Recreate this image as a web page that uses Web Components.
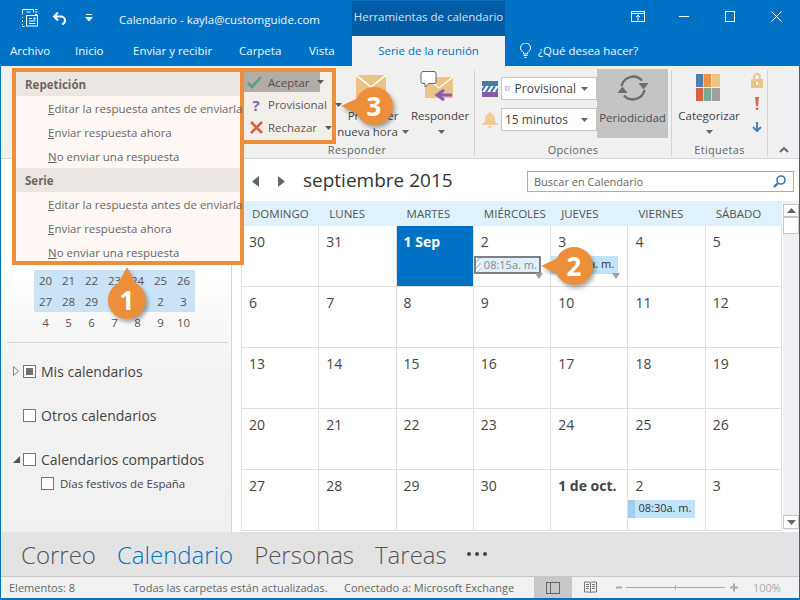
<!DOCTYPE html>
<html lang="es"><head><meta charset="utf-8"><title>Calendario</title>
<style>html,body{margin:0;padding:0;background:#fff}</style></head>
<body>
<ol-app>
  <ol-titlebar></ol-titlebar>
  <ol-tabs></ol-tabs>
  <ol-ribbon></ol-ribbon>
  <ol-main>
    <ol-sidebar slot="side"></ol-sidebar>
    <ol-calendar slot="cal"></ol-calendar>
  </ol-main>
  <ol-nav></ol-nav>
  <ol-status></ol-status>
  <ol-menu>
    <ol-menu-head>Repetición</ol-menu-head>
    <ol-menu-item><u>E</u>ditar la respuesta antes de enviarla</ol-menu-item>
    <ol-menu-item><u>E</u>nviar respuesta ahora</ol-menu-item>
    <ol-menu-item><u>N</u>o enviar una respuesta</ol-menu-item>
    <ol-menu-head>Serie</ol-menu-head>
    <ol-menu-item><u>E</u>ditar la respuesta antes de enviarla</ol-menu-item>
    <ol-menu-item><u>E</u>nviar respuesta ahora</ol-menu-item>
    <ol-menu-item><u>N</u>o enviar una respuesta</ol-menu-item>
  </ol-menu>
  <ol-callout n="1" cx="127" cy="300" dir="up"></ol-callout>
  <ol-callout n="2" cx="574" cy="266" dir="left"></ol-callout>
  <ol-callout n="3" cx="374" cy="106" dir="left"></ol-callout>
</ol-app>
<script>
const FONT = '"Open Sans","Noto Sans",sans-serif';
function def(name, css, html, init){
  customElements.define(name, class extends HTMLElement{
    constructor(){
      super();
      const r = this.attachShadow({mode:'open'});
      r.innerHTML = '<style>'+css+'</style>'+(typeof html==='function'?html(this):html);
    }
    connectedCallback(){ if(init) init(this); }
  });
}
const caret = (c='#666',cls='')=>`<svg class="${cls}" width="7" height="4" viewBox="0 0 7 4" style="flex:none"><path d="M0 0h7L3.5 4z" fill="${c}"/></svg>`;

def('ol-app',`:host{display:flex;flex-direction:column;position:relative;width:800px;height:600px;box-sizing:border-box;padding:0 1px 2px 1px;background:#0072c6;font-family:${FONT};overflow:hidden}`,'<slot></slot>');

def('ol-titlebar',`:host{display:flex;height:36px;color:#fff;font-size:11.5px;flex:none}
.left{width:351px;display:flex;align-items:center;padding-left:20px;box-sizing:border-box}
.title{margin-left:26px;color:#eef6fc;white-space:nowrap;padding-top:2px}
.ctx{width:153px;margin-top:1px;background:#005ca4;color:#cfe3f3;display:flex;align-items:center;justify-content:center;white-space:nowrap;padding-bottom:4px;box-sizing:border-box}
.sp{flex:1}
.win{width:46px;display:flex;align-items:center;justify-content:center;padding-bottom:3px}
svg{display:block}`,`
<div class="left">
 <svg width="18" height="18" viewBox="0 0 18 18" fill="none" stroke="#fff"><path d="M1.5 5.5V.5h11v3M5.500 3h4M1.500 8v1M1.500 11v2M14 .5h2.500M14 3h2.500M14 5.500h2.500M1.500 15v1M1.500 17.500h2"/><rect x="5.500" y="6.500" width="11" height="10.500"/><path d="M8 9.500h3M8 12h6.500M8 14.500h6.500" /><rect x="12.500" y="8.500" width="2" height="2" fill="#fff" stroke="none"/></svg>
 <svg style="margin-left:13px" width="16" height="15" viewBox="0 0 16 15" fill="none" stroke="#fff" stroke-width="2"><path d="M6 1.500 2 5.500l4 4M2 5.500h7a4 4 0 0 1 4 4 4 4 0 0 1-3 3.800"/></svg>
 <svg style="margin-left:17px" width="8" height="8" viewBox="0 0 8 8" fill="#fff"><path d="M1 0h6v1H1zM0 3h8L4 7.500z"/></svg>
 <span class="title" style="margin-left:26px">Calendario - kayla@customguide.com</span>
</div>
<div class="ctx">Herramientas de calendario</div>
<div class="sp"></div>
<div class="win"><svg width="14" height="11" viewBox="0 0 14 11" fill="none" stroke="#fff"><rect x=".5" y=".5" width="13" height="10"/><path d="M.5 2.500h13M7 9.500V4M5 6l2-2 2 2"/></svg></div>
<div class="win"><svg width="10" height="11" viewBox="0 0 10 11" stroke="#fff"><path d="M0 5.500h10"/></svg></div>
<div class="win"><svg width="10" height="11" viewBox="0 0 10 11" fill="none" stroke="#fff"><rect x=".5" y=".5" width="9" height="10"/></svg></div>
<div class="win"><svg width="11" height="11" viewBox="0 0 11 11" stroke="#fff"><path d="M.5.500l10 10M10.500.500l-10 10"/></svg></div>`);

def('ol-tabs',`:host{display:flex;height:30px;color:#eef6fc;font-size:11.5px;flex:none;align-items:stretch;white-space:nowrap}
span{display:flex;align-items:center;padding-bottom:1px}
.a{width:351px;display:flex;padding-left:9px;box-sizing:border-box}
.a span:nth-child(1){width:65px}.a span:nth-child(2){width:58px}.a span:nth-child(3){width:106px}.a span:nth-child(4){width:70px}
.act{width:153px;background:#f0f0f0;color:#0072c6;justify-content:center}
.tell{margin-left:15px;gap:7px}`,`
<div class="a"><span>Archivo</span><span>Inicio</span><span>Enviar y recibir</span><span>Carpeta</span><span>Vista</span></div>
<span class="act">Serie de la reunión</span>
<span class="tell"><svg width="11" height="15" viewBox="0 0 11 15" fill="none" stroke="#fff"><path d="M3.500 11V9.500C2 8.500.5 7.300.5 5a5 5 0 0 1 10 0c0 2.300-1.500 3.500-3 4.500V11zM3.500 12.500h4M4.500 14.500h2"/></svg>¿Qué desea hacer?</span>`);

def('ol-ribbon',`:host{display:flex;height:93px;box-sizing:border-box;background:#f0f0f0;border-bottom:1px solid #d4d4d4;flex:none;font-size:11.5px;color:#444;white-space:nowrap}
.g{display:flex;flex-direction:column;flex:none;position:relative}
.c{height:78px;display:flex;flex:none}
.l{height:14px;text-align:center;color:#666;line-height:12px;font-size:11px;letter-spacing:.3px}
.sep{width:1px;background:#d4d4d4;margin:4px 0 2px;flex:none}
.stack{box-sizing:border-box;width:96px;height:76px;margin-top:2px;border:4px solid #ed8f3a;border-left-width:4px;background:#f2eeea;display:flex;flex-direction:column;color:#5f5a57}
.stack div{display:flex;align-items:center;height:23px;flex:none}
.stack i{font-style:normal;width:20px;display:flex;justify-content:center;flex:none}
.stack svg{margin-left:4px}
.stack .on{background:#b1aca7;width:76px;height:20px;margin-bottom:1px;color:#55514f}
.big{display:flex;flex-direction:column;align-items:center;flex:none;color:#444}
.big .ic{height:42px;flex:none;position:relative;width:100%}
.big span{height:16px;line-height:16px;display:flex;align-items:center;gap:4px}
.big .ic svg{position:absolute}
.sel{box-sizing:border-box;width:96px;height:23px;background:#fff;border:1px solid #c6c6c6;display:flex;align-items:center;gap:5px;padding:0 8px 0 3px;color:#444;font-size:12px}
.sel b{font-weight:400;flex:1}
.col{display:flex;flex-direction:column;gap:8px;padding-top:11px}
.row{display:flex;align-items:center;gap:3px}
.per{width:71px;height:69px;background:#c4c4c4;margin-top:3px;display:flex;flex-direction:column;align-items:center;flex:none;color:#4e4e4e}
.per svg{margin-top:4px}
.per span{margin-top:7px}
.side{display:flex;flex-direction:column;align-items:center;width:24px;padding-top:7px;flex:none}
.chev{flex:1;display:flex;align-items:flex-end;justify-content:center;padding-bottom:5px}`,`
<div class="g" style="width:239px"></div>
<div class="g" style="width:234px">
 <div class="c">
  <div class="stack">
   <div class="on"><i><svg style="margin:0" width="15" height="13" viewBox="0 0 15 13" fill="none" stroke="#5f9e86" stroke-width="2.600"><path d="M1 7l4 4 9-10"/></svg></i><span style="margin-left:4px">Aceptar</span><span style="margin-left:4px;display:flex">${caret('#5f5a57')}</span></div>
   <div><i style="color:#8b63a8;font-weight:700;font-size:15px;margin-left:2px">?</i><span style="margin-left:2px">Provisional</span><span style="margin-left:4px;display:flex">${caret('#5f5a57')}</span></div>
   <div><i style="margin-left:2px"><svg style="margin:0" width="13" height="13" viewBox="0 0 13 13" stroke="#dc5d3c" stroke-width="2.600"><path d="M1 1l11 11M12 1L1 12"/></svg></i><span style="margin-left:2px">Rechazar</span><span style="margin-left:4px;display:flex">${caret('#5f5a57')}</span></div>
  </div>
  <div class="big" style="width:70px;margin-left:2px">
   <div class="ic"><svg style="left:18px;top:9px" width="30" height="24" viewBox="0 0 30 24"><rect width="30" height="24" fill="#edc488"/><path d="M0 0l15 12L30 0" fill="none" stroke="#fff" stroke-width="1.500"/></svg></div>
   <span style="margin-top:0">Proponer</span><span>nueva hora ${caret()}</span>
  </div>
  <div class="big" style="width:64px">
   <div class="ic"><svg style="left:12px;top:5px" width="36" height="32" viewBox="0 0 36 32"><rect x="5" y="6" width="28" height="21" fill="#edc488"/><path d="M5 6l14 11L33 6" fill="none" stroke="#fff" stroke-width="1.200"/><path d="M3 .5h11a2 2 0 0 1 2 2v8a2 2 0 0 1-2 2H9l-4 3.500v-3.500H3a2 2 0 0 1-2-2v-8a2 2 0 0 1 2-2z" fill="#fff" stroke="#666"/><path d="M24 19l-7 5 7 5M17 24h15" fill="none" stroke="#8b5cb0" stroke-width="3"/></svg></div>
   <span>Responder</span><span style="padding-left:2px">${caret()}</span>
  </div>
 </div>
 <div class="l">Responder</div>
</div>
<div class="sep"></div>
<div class="g" style="width:196px">
 <div class="c">
  <div class="col" style="margin-left:7px">
   <div class="row"><svg width="16" height="16" viewBox="0 0 16 16"><rect width="16" height="5" fill="#4a78ae"/><rect y="11" width="16" height="5" fill="#8a59a9"/><rect y="5" width="16" height="6" fill="#fff"/><path d="M-1 11l4-6M4 11l4-6M9 11l4-6M14 11l4-6" stroke="#4a78ae" stroke-width="2.200"/></svg>
    <div class="sel"><svg width="13" height="13" viewBox="0 0 13 13"><rect x=".5" y=".5" width="12" height="12" fill="#fff" stroke="#8f6fd0"/><path d="M1 5l4-4M1 9l8-8M3 12l9-9M7 12l5-5" stroke="#8f6fd0"/></svg><b>Provisional</b>${caret()}</div></div>
   <div class="row"><svg width="16" height="16" viewBox="0 0 16 16" fill="#f3cb94"><path d="M8 0a1.500 1.500 0 0 1 1.500 1.500C12 2.500 13 5 13 8c0 2 1 3 3 4v1H0v-1c2-1 3-2 3-4 0-3 1-5.500 3.500-6.500A1.500 1.500 0 0 1 8 0zM6 14h4a2 2 0 0 1-4 0z"/></svg>
    <div class="sel"><b>15 minutos</b>${caret()}</div></div>
  </div>
  <div class="per">
   <svg width="32" height="30" viewBox="0 0 32 30" fill="none" stroke="#6d6d6d" stroke-width="2.400"><path d="M4.500 13A12 12 0 0 1 25 7.500M27.500 17A12 12 0 0 1 7 22.500"/><path d="M21.500 10h10L26.500 16.500zM10.500 20H.5L5.500 13.500z" fill="#6d6d6d" stroke="none"/></svg>
   <span>Periodicidad</span>
  </div>
 </div>
 <div class="l" style="padding-right:0">Opciones</div>
</div>
<div class="sep"></div>
<div class="g" style="width:95px">
 <div class="c">
  <div class="big" style="width:74px">
   <div class="ic"><svg style="left:24px;top:8px" width="24" height="27" viewBox="0 0 24 27"><rect width="7.300" height="13" fill="#4a7fb5"/><rect x="8" width="7.300" height="13" fill="#ea9443"/><rect x="16" width="8" height="13" fill="#edc488"/><rect y="14" width="7.300" height="13" fill="#da6140"/><rect x="8" y="14" width="7.300" height="13" fill="#74ac96"/><rect x="16" y="14" width="8" height="13" fill="#9f9f9f"/></svg></div>
   <span>Categorizar</span><span>${caret()}</span>
  </div>
  <div class="side" style="margin-left:-1px">
   <svg width="12" height="15" viewBox="0 0 12 15"><path d="M3 6.500V4a3 3 0 0 1 6 0v2.500" fill="none" stroke="#edc488" stroke-width="1.800"/><rect y="6" width="12" height="9" rx="1" fill="#edc488"/><rect x="5" y="9" width="2" height="3" fill="#fff"/></svg>
   <svg style="margin-top:9px" width="4" height="13" viewBox="0 0 4 13" fill="#de6a48"><path d="M0 0h4L3 9H1zM.8 10.500h2.400V13H.8z"/></svg>
   <svg style="margin-top:12px" width="10" height="10" viewBox="0 0 10 10" fill="none" stroke="#4a80ba" stroke-width="2"><path d="M5 0v8M1 5l4 4 4-4"/></svg>
  </div>
 </div>
 <div class="l" style="padding-right:-1px">Etiquetas</div>
</div>
<div class="sep"></div>
<div class="g" style="flex:1"><div class="chev" style="height:90px;box-sizing:border-box"><svg width="10" height="6" viewBox="0 0 10 6" fill="none" stroke="#666" stroke-width="1.800"><path d="M1 5l4-4 4 4"/></svg></div></div>`);

def('ol-main',`:host{display:flex;flex:none;height:373px;background:#fff}`,'<slot name="side"></slot><slot name="cal"></slot>');

def('ol-sidebar',`:host{display:block;flex:none;width:231px;box-sizing:border-box;border-right:1px solid #d5d5d5;background:linear-gradient(#fff 0,#fff 120px,#f2f2f2 210px,#f0f0f0 100%);padding-top:111px;color:#444}
.mini{margin-left:33px;width:161px;display:grid;grid-template-columns:repeat(7,23px);font-size:11.5px;line-height:21px;text-align:center;color:#555}
.mini span{height:21px}.b{background:#cae3f7}
hr{border:0;height:1px;background:#d4d4d4;margin:9px 3px 0 6px}
.t{display:flex;align-items:center;height:20px;font-size:14px;color:#444;white-space:nowrap}
.tri{width:9px;margin-left:12px;flex:none;display:flex}
.cb{width:13px;height:13px;box-sizing:border-box;border:1px solid #777;background:#fff;margin-left:1px;margin-right:5px;flex:none;display:flex;align-items:center;justify-content:center}
.cb i{width:7px;height:7px;background:#707070}`,()=>{
  const w1=[20,21,22,23,24,25,26],w2=[27,28,29,30,1,2,3],w3=[4,5,6,7,8,9,10];
  return `<div class="mini">${w1.concat(w2).map(n=>`<span class="b">${n}</span>`).join('')}${w3.map(n=>`<span>${n}</span>`).join('')}</div><hr>
  <div class="t" style="margin-top:18px"><span class="tri"><svg width="6" height="10" viewBox="0 0 6 10" fill="none" stroke="#888"><path d="M.5.500l5 4.500-5 4.500z"/></svg></span><span class="cb"><i></i></span>Mis calendarios</div>
  <div class="t" style="margin-top:24px"><span class="tri"></span><span class="cb"></span>Otros calendarios</div>
  <div class="t" style="margin-top:24px"><span class="tri"><svg width="7" height="7" viewBox="0 0 7 7"><path d="M7 0v7H0z" fill="#555"/></svg></span><span class="cb"></span>Calendarios compartidos</div>
  <div class="t" style="margin-top:4px;font-size:11.5px"><span class="tri" style="margin-left:31px"></span><span class="cb" style="margin-left:0;margin-right:6px"></span>Días festivos de España</div>`;
});

def('ol-calendar',`:host{display:block;flex:1;min-width:0;padding-left:9px;color:#444}
.h{height:42px;display:flex;align-items:center;padding-top:2px;box-sizing:border-box}
.h svg{flex:none}
.title{font-size:19px;margin-left:18px;color:#333;white-space:nowrap;padding-bottom:2px}
.search{margin-left:auto;margin-right:5px;box-sizing:border-box;width:267px;height:21px;border:1px solid #abadb3;background:#fff;display:flex;align-items:center;padding:0 7px 0 6px;font-size:11px;color:#666;justify-content:space-between}
.b{display:flex}
.grid{width:541px;flex:none}
.dow{display:grid;grid-template-columns:repeat(7,1fr);height:25px;background:#def1fc;font-size:11.5px;color:#555;line-height:25px}
.dow span{padding-left:11px;white-space:nowrap}
.w{display:grid;grid-template-columns:repeat(7,1fr);height:61px}
.d{box-sizing:border-box;border-left:1px solid #e0e0e0;border-bottom:1px solid #e0e0e0;position:relative;font-size:14px;line-height:18px;padding:7px 0 0 7px;white-space:nowrap;color:#444}
.d:last-child{border-right:1px solid #e0e0e0}
.d.today{background:#0072c6;color:#fff;font-weight:700}
.d.bold{font-weight:700}
.e{position:absolute;left:0;top:30px;width:67px;height:18px;background:#c0e4fb;font-size:11px;line-height:16px;color:#333;padding-left:10px;box-sizing:border-box}
.e.bar{top:30px}
.e.bar::before{content:"";position:absolute;left:0;top:0;bottom:0;width:7px;background:#a0cdf0}
.e.tent{background:#ddf0fc;border:2px solid #808080;color:#8a8a8a;padding-left:8px;line-height:14px}
.e.tent::before{content:"";position:absolute;left:0;top:0;bottom:0;width:5px;background:repeating-linear-gradient(135deg,#fff 0 2px,#b9d9ef 2px 4px)}
.tr{position:absolute;top:47px;left:61px;width:0;height:0;border:4px solid transparent;border-top:6px solid #a0a0a0;border-bottom:0}
.sb{width:16px;margin-left:1px;height:329px;background:#f0f0f0;display:flex;flex-direction:column;flex:none;position:relative}
.sb div{box-sizing:border-box;background:#fff;border:1px solid #c6c6c6;display:flex;align-items:center;justify-content:center;flex:none}`,()=>{
  const dows=['DOMINGO','LUNES','MARTES','MIÉRCOLES','JUEVES','VIERNES','SÁBADO'];
  const rows=[[30,31,'1 Sep',2,3,4,5],[6,7,8,9,10,11,12],[13,14,15,16,17,18,19],[20,21,22,23,24,25,26],[27,28,29,30,'1 de oct.',2,3]];
  const cell=(v,r,c)=>{
    let cls='d',extra='';
    if(v==='1 Sep')cls+=' today';
    if(v==='1 de oct.')cls+=' bold';
    if(r===0&&c===3)extra='<div class="e tent">08:15a. m.</div><i class="tr"></i>';
    if(r===0&&c===4)extra='<div class="e">08:15a. m.</div><i class="tr"></i>';
    if(r===4&&c===5)extra='<div class="e bar">08:30a. m.</div>';
    return `<div class="${cls}">${v}${extra}</div>`;
  };
  return `<div class="h">
   <svg style="margin-left:11px" width="8" height="11" viewBox="0 0 8 11"><path d="M7 0v11L0 5.500z" fill="#666"/></svg>
   <svg style="margin-left:17px" width="8" height="11" viewBox="0 0 8 11"><path d="M1 0v11l7-5.500z" fill="#666"/></svg>
   <span class="title">septiembre 2015</span>
   <div class="search">Buscar en Calendario<svg width="13" height="13" viewBox="0 0 13 13" fill="none" stroke="#3a78ad" stroke-width="1.600"><circle cx="8" cy="5" r="4"/><path d="M5 8l-4 4" stroke-width="2.400"/></svg></div>
  </div>
  <div class="b"><div class="grid">
   <div class="dow">${dows.map(d=>`<span>${d}</span>`).join('')}</div>
   ${rows.map((w,r)=>`<div class="w">${w.map((v,c)=>cell(v,r,c)).join('')}</div>`).join('')}
  </div>
  <div class="sb"><div style="height:13px;margin-top:3px"><svg width="9" height="5" viewBox="0 0 9 5"><path d="M0 5h9L4.500 0z" fill="#666"/></svg></div>
   <div style="height:17px;margin-top:0"></div><span style="flex:1"></span>
   <div style="height:14px;margin-bottom:1px"><svg width="9" height="5" viewBox="0 0 9 5"><path d="M0 0h9L4.500 5z" fill="#666"/></svg></div></div></div>`;
});

def('ol-nav',`:host{display:flex;height:45px;flex:none;background:#e3e3e3;align-items:center;padding-left:20px;gap:21px;font-size:24px;font-weight:300;color:#555;white-space:nowrap;box-sizing:border-box;border-bottom:1px solid #c8c8c8}
.on{color:#0072c6}
i{display:flex;gap:4px;margin-left:-1px}
i b{width:4px;height:4px;border-radius:50%;background:#444;display:block}`,`<span>Correo</span><span class="on">Calendario</span><span>Personas</span><span>Tareas</span><i><b></b><b></b><b></b></i>`);

def('ol-status',`:host{display:flex;flex:1;background:#f1f1f1;align-items:center;font-size:11px;color:#666;white-space:nowrap;padding-left:8px}
.v{width:38px;align-self:stretch;background:#c8c8c8;display:flex;align-items:center;justify-content:center;flex:none;margin-left:17px}
svg{flex:none}`,`<span style="width:124px;flex:none">Elementos: 8</span><span style="width:211px;flex:none">Todas las carpetas están actualizadas.</span><span style="width:173px;flex:none">Conectado a: Microsoft Exchange</span>
<div class="v" style="margin-left:17px"><svg width="14" height="12" viewBox="0 0 14 12" fill="none" stroke="#666"><rect x=".5" y=".5" width="13" height="11"/><path d="M4.500 0v12"/></svg></div>
<svg style="margin-left:12px" width="13" height="13" viewBox="0 0 13 13" fill="none" stroke="#777"><path d="M.5 1h5l1 1 1-1h5v10h-5l-1 1-1-1h-5zM6.500 2v9M2 3.500h3M2 5.500h3M2 7.500h3M8 3.500h3M8 5.500h3M8 7.500h3"/></svg>
<svg style="margin-left:19px" width="122" height="11" viewBox="0 0 122 11" fill="none" stroke="#aaa"><path d="M0 5.500h6M10 5.500h99M59.500 3v5"/><path d="M114 5.500h8M118 1.500v8" stroke-width="2"/><path d="M0 5.500h6" stroke-width="2"/></svg>
<span style="margin-left:15px;color:#aaa">100%</span>`);

def('ol-menu',`:host{position:absolute;left:12px;top:68px;width:232px;height:197px;box-sizing:border-box;border:4px solid #ed8f3a;background:#fff8f4;display:flex;flex-direction:column;color:#6b6664;font-size:11.5px;white-space:nowrap;z-index:5}`,'<slot></slot>');
def('ol-menu-head',`:host{display:flex;align-items:center;height:24px;background:#ebe6e1;padding-left:9px;font-weight:700;color:#6d6663;flex:none}`,'<slot></slot>');
def('ol-menu-item',`:host{display:flex;align-items:center;height:24px;padding-left:32px;flex:none;margin-bottom:0}`,'<span><slot></slot></span>');

def('ol-callout',`:host{position:absolute;z-index:9;width:0;height:0}
svg{position:absolute;left:-40px;top:-40px;overflow:visible;filter:drop-shadow(2px 3px 2px rgba(0,0,0,.35))}
span{position:absolute;left:-20px;top:-20px;width:40px;height:40px;display:flex;align-items:center;justify-content:center;color:#fff;font:700 26px ${FONT}}`,
 el=>{
  const up=el.getAttribute('dir')==='up';
  const p=up?'M-9 -16L0 -33L9 -16z':'M-16 -8L-33 0L-16 8z';
  return `<svg width="80" height="80" viewBox="-40 -40 80 80"><circle r="19" fill="#ed8f3a"/><path d="${p}" fill="#ed8f3a"/></svg><span>${el.getAttribute('n')}</span>`;
 },
 el=>{el.style.left=el.getAttribute('cx')+'px';el.style.top=el.getAttribute('cy')+'px';});
</script>
</body></html>
